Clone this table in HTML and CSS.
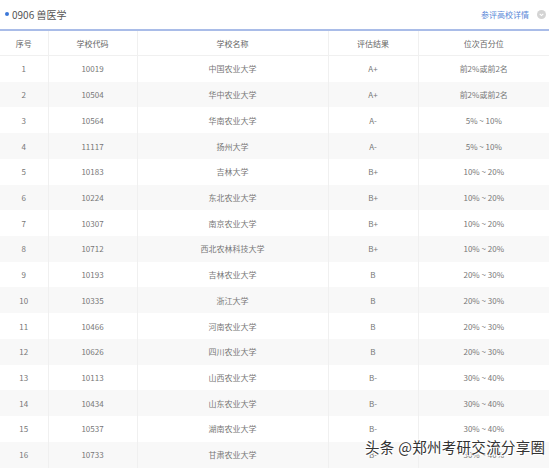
FILE: index.html
```html
<!DOCTYPE html>
<html lang="zh">
<head>
<meta charset="utf-8">
<link rel="stylesheet" href="styles.css">
</head>
<body>
<div class="page">
  <div class="head">
    <div class="title"><span class="dot"></span>0906 兽医学</div>
    <div class="link">参评高校详情 <span class="ico"><svg width="9" height="9" viewBox="0 0 10 10"><circle cx="5" cy="5" r="5" fill="#d4d4d4"/><path d="M3 4.2 L5 6.2 L7 4.2" stroke="#fff" stroke-width="1.2" fill="none"/></svg></span></div>
  </div>
  <table class="tbl">
    <colgroup><col class="c1"><col class="c2"><col class="c3"><col class="c4"><col class="c5"></colgroup>
    <thead><tr><th>序号</th><th>学校代码</th><th>学校名称</th><th>评估结果</th><th>位次百分位</th></tr></thead>
    <tbody>
      <tr><td>1</td><td>10019</td><td>中国农业大学</td><td>A+</td><td>前2%或前2名</td></tr>
      <tr><td>2</td><td>10504</td><td>华中农业大学</td><td>A+</td><td>前2%或前2名</td></tr>
      <tr><td>3</td><td>10564</td><td>华南农业大学</td><td>A-</td><td>5% ~ 10%</td></tr>
      <tr><td>4</td><td>11117</td><td>扬州大学</td><td>A-</td><td>5% ~ 10%</td></tr>
      <tr><td>5</td><td>10183</td><td>吉林大学</td><td>B+</td><td>10% ~ 20%</td></tr>
      <tr><td>6</td><td>10224</td><td>东北农业大学</td><td>B+</td><td>10% ~ 20%</td></tr>
      <tr><td>7</td><td>10307</td><td>南京农业大学</td><td>B+</td><td>10% ~ 20%</td></tr>
      <tr><td>8</td><td>10712</td><td>西北农林科技大学</td><td>B+</td><td>10% ~ 20%</td></tr>
      <tr><td>9</td><td>10193</td><td>吉林农业大学</td><td>B</td><td>20% ~ 30%</td></tr>
      <tr><td>10</td><td>10335</td><td>浙江大学</td><td>B</td><td>20% ~ 30%</td></tr>
      <tr><td>11</td><td>10466</td><td>河南农业大学</td><td>B</td><td>20% ~ 30%</td></tr>
      <tr><td>12</td><td>10626</td><td>四川农业大学</td><td>B</td><td>20% ~ 30%</td></tr>
      <tr><td>13</td><td>10113</td><td>山西农业大学</td><td>B-</td><td>30% ~ 40%</td></tr>
      <tr><td>14</td><td>10434</td><td>山东农业大学</td><td>B-</td><td>30% ~ 40%</td></tr>
      <tr><td>15</td><td>10537</td><td>湖南农业大学</td><td>B-</td><td>30% ~ 40%</td></tr>
      <tr><td>16</td><td>10733</td><td>甘肃农业大学</td><td>B-</td><td>30% ~ 40%</td></tr>
    </tbody>
  </table>
  <div class="mark">头条 @郑州考研交流分享圈</div>
</div>
</body>
</html>
```
FILE: styles.css
```css
html, body {
  margin: 0;
  padding: 0;
  background: #fff;
}
.page {
  position: relative;
  width: 549px;
  height: 468px;
  overflow: hidden;
  font-family: "Noto Sans CJK SC", "Open Sans", sans-serif;
  color: #777;
}
.head {
  height: 29px;
  display: flex;
  align-items: center;
  justify-content: space-between;
  padding: 0 3px 0 5px;
  border-bottom: 2px solid #a9bce8;
}
.title {
  display: flex;
  align-items: center;
  font-size: 10px;
  color: #555;
  margin-top: -1px;
}
.dot {
  width: 4px;
  height: 4px;
  border-radius: 50%;
  background: #3b78d8;
  margin-right: 3px;
}
.link {
  display: flex;
  align-items: center;
  font-size: 8px;
  color: #5a88d8;
}
.ico {
  display: flex;
  margin-left: 8px;
}
.tbl {
  width: 549px;
  table-layout: fixed;
  border-collapse: collapse;
  font-size: 8px;
}
.c1 { width: 48px; }
.c2 { width: 89px; }
.c3 { width: 191px; }
.c4 { width: 90px; }
.c5 { width: 131px; }
.tbl th, .tbl td {
  text-align: center;
  font-weight: normal;
  padding: 0;
  border-left: 1px solid #f0f0f0;
  white-space: nowrap;
}
.tbl th:first-child, .tbl td:first-child { border-left: none; }
.tbl th {
  height: 24px;
  color: #666;
}
.tbl td {
  height: 25.73px;
}
.tbl tbody tr:nth-child(even) td { background: #f8f8f8; }
.tbl thead tr { border-bottom: 1px solid #f0f0f0; }
.mark {
  position: absolute;
  left: 365px;
  top: 436px;
  font-size: 14.5px;
  color: #333;
  letter-spacing: 0.3px;
  text-shadow: 1px 1px 0 #fff, -1px -1px 0 #fff, 1px -1px 0 #fff, -1px 1px 0 #fff;
}
```
